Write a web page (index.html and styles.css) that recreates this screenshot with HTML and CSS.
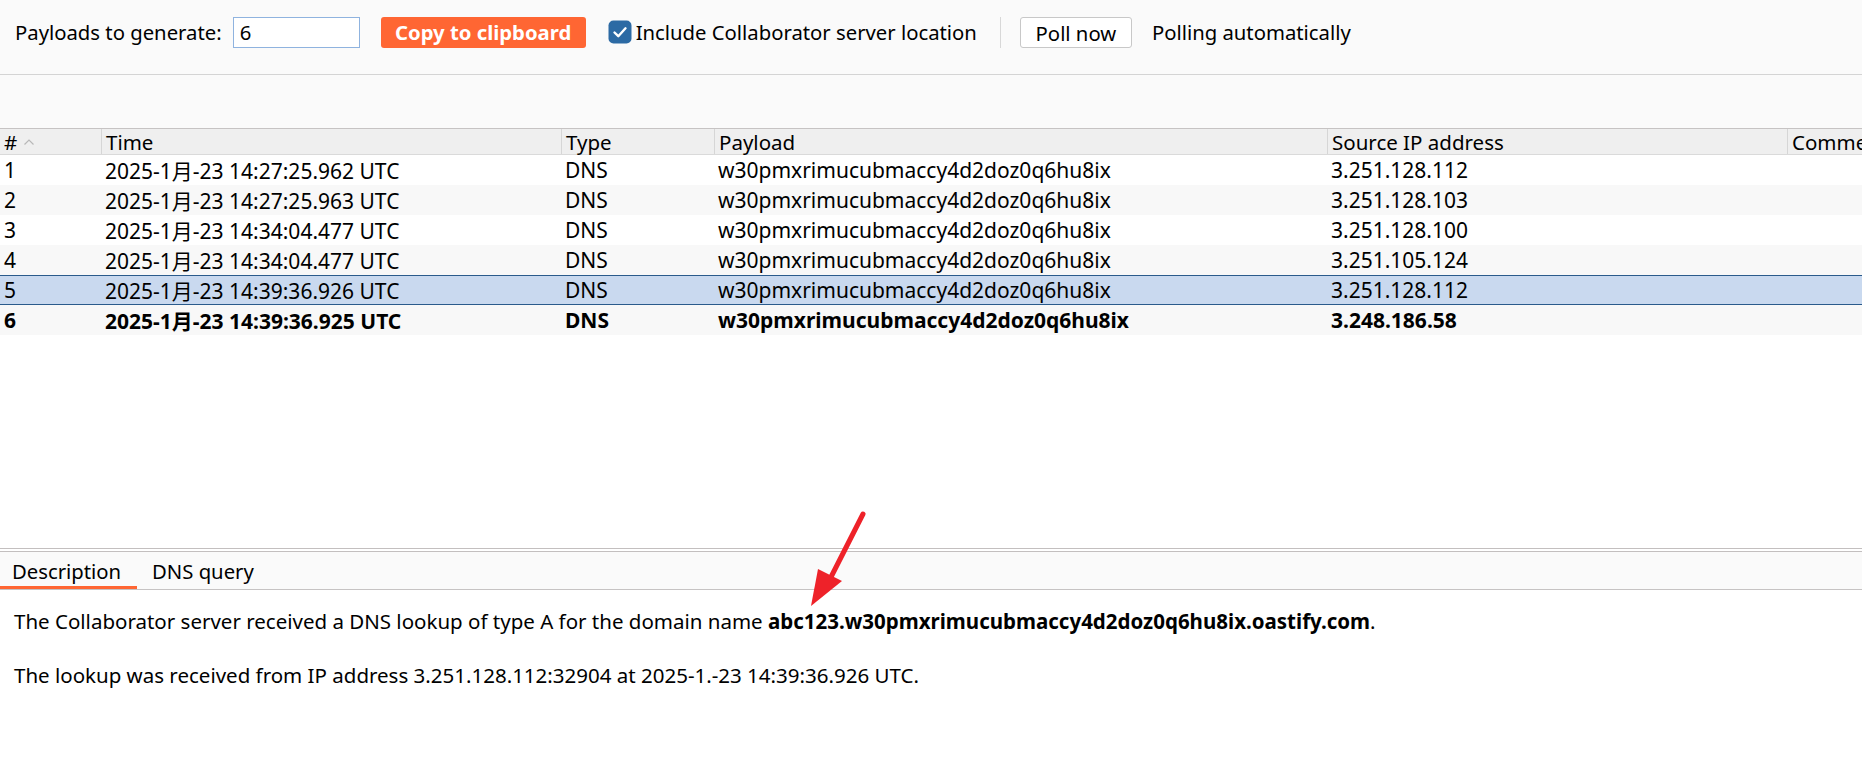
FILE: index.html
```html
<!DOCTYPE html>
<html>
<head>
<meta charset="utf-8">
<link rel="stylesheet" href="styles.css">
</head>
<body>
<div class="app">
  <div class="toolbar">
    <span class="label">Payloads to generate:</span>
    <input class="count" type="text" value="6">
    <button class="copy">Copy to clipboard</button>
    <span class="check">
      <svg viewBox="0 0 24 24" width="24" height="24"><rect x="0.5" y="0.5" width="23" height="23" rx="5" fill="#2c6aa4"/><path d="M6.5 12.5 L10.3 16.2 L17.5 8.3" fill="none" stroke="#fff" stroke-width="2.4" stroke-linecap="round" stroke-linejoin="round"/></svg>
    </span>
    <span class="check-label">Include Collaborator server location</span>
    <span class="sep"></span>
    <button class="poll">Poll now</button>
    <span class="status">Polling automatically</span>
  </div>
  <div class="gap"></div>
  <div class="table">
    <div class="row head">
      <div class="cell c-num">#<svg class="sort" width="12" height="8" viewBox="0 0 12 8"><path d="M1.5 6.5 L6 2 L10.5 6.5" fill="none" stroke="#b8b8b8" stroke-width="1.2"/></svg></div>
      <div class="cell">Time</div>
      <div class="cell">Type</div>
      <div class="cell">Payload</div>
      <div class="cell">Source IP address</div>
      <div class="cell last">Comme</div>
    </div>
    <div class="row">
      <div class="cell">1</div><div class="cell">2025-1月-23 14:27:25.962 UTC</div><div class="cell">DNS</div><div class="cell">w30pmxrimucubmaccy4d2doz0q6hu8ix</div><div class="cell">3.251.128.112</div><div class="cell"></div>
    </div>
    <div class="row alt">
      <div class="cell">2</div><div class="cell">2025-1月-23 14:27:25.963 UTC</div><div class="cell">DNS</div><div class="cell">w30pmxrimucubmaccy4d2doz0q6hu8ix</div><div class="cell">3.251.128.103</div><div class="cell"></div>
    </div>
    <div class="row">
      <div class="cell">3</div><div class="cell">2025-1月-23 14:34:04.477 UTC</div><div class="cell">DNS</div><div class="cell">w30pmxrimucubmaccy4d2doz0q6hu8ix</div><div class="cell">3.251.128.100</div><div class="cell"></div>
    </div>
    <div class="row alt">
      <div class="cell">4</div><div class="cell">2025-1月-23 14:34:04.477 UTC</div><div class="cell">DNS</div><div class="cell">w30pmxrimucubmaccy4d2doz0q6hu8ix</div><div class="cell">3.251.105.124</div><div class="cell"></div>
    </div>
    <div class="row selected">
      <div class="cell">5</div><div class="cell">2025-1月-23 14:39:36.926 UTC</div><div class="cell">DNS</div><div class="cell">w30pmxrimucubmaccy4d2doz0q6hu8ix</div><div class="cell">3.251.128.112</div><div class="cell"></div>
    </div>
    <div class="row alt bold">
      <div class="cell">6</div><div class="cell">2025-1月-23 14:39:36.925 UTC</div><div class="cell">DNS</div><div class="cell">w30pmxrimucubmaccy4d2doz0q6hu8ix</div><div class="cell">3.248.186.58</div><div class="cell"></div>
    </div>
  </div>
  <div class="divider"></div>
  <div class="tabs">
    <span class="tab active">Description</span>
    <span class="tab">DNS query</span>
  </div>
  <div class="desc">
    <p>The Collaborator server received a DNS lookup of type A for the domain name <b>abc123.w30pmxrimucubmaccy4d2doz0q6hu8ix.oastify.com</b>.</p>
    <p>The lookup was received from IP address 3.251.128.112:32904 at 2025-1.-23 14:39:36.926 UTC.</p>
  </div>
  <svg class="arrow" width="80" height="110" viewBox="0 0 80 110">
    <path d="M58 6 L25 71" stroke="#ee2229" stroke-width="5" stroke-linecap="round" fill="none"/>
    <path d="M6 98 L13 61 L37 73 Z" fill="#ee2229"/>
  </svg>
</div>
</body>
</html>
```
FILE: styles.css
```css
html, body {
  margin: 0;
  padding: 0;
  background: #ffffff;
}
.app {
  position: relative;
  width: 1862px;
  height: 760px;
  overflow: hidden;
  font-family: "Noto Sans", "Noto Sans CJK SC", sans-serif;
  font-size: 20px;
  color: #000;
}
.toolbar {
  height: 57px;
  display: flex;
  align-items: flex-start;
  padding: 17px 0 0 15px;
  background: #fafafa;
  border-bottom: 1px solid #d4d4d4;
  font-size: 20.3px;
  line-height: 31px;
}
.toolbar > * {
  flex: none;
}
.count {
  margin-left: 11px;
  width: 127px;
  height: 31px;
  box-sizing: border-box;
  border: 1px solid #8fb3df;
  padding: 0 0 0 6px;
  font: inherit;
  background: #fff;
  outline: none;
}
.copy {
  margin-left: 21px;
  width: 205px;
  height: 31px;
  border: none;
  border-radius: 3px;
  background: #ff6633;
  color: #fff;
  font: inherit;
  font-weight: bold;
  padding: 0;
}
.check {
  margin-left: 22px;
  margin-top: 3px;
  display: flex;
  width: 24px;
  height: 24px;
}
.check-label {
  margin-left: 4px;
}
.sep {
  width: 1px;
  height: 31px;
  background: #d8d8d8;
  margin-left: 23px;
}
.poll {
  margin-left: 19px;
  width: 112px;
  height: 31px;
  border: 1px solid #c8c8c8;
  border-radius: 3px;
  background: #fff;
  font: inherit;
  padding: 0;
  color: #000;
}
.status {
  margin-left: 20px;
}
.gap {
  height: 53px;
  background: #fafafa;
}
.table {
  height: 419px;
  background: #fff;
  border-top: 1px solid #c6c3c3;
  font-size: 21px;
}
.row {
  display: grid;
  grid-template-columns: 101px 460px 153px 613px 460px 1fr;
  height: 30px;
  align-items: center;
}
.row.head {
  height: 25px;
  background: #efefef;
  border-bottom: 1px solid #dadada;
  font-size: 20.5px;
}
.head .cell {
  height: 25px;
  line-height: 26px;
  border-left: 1px solid #d6d6d6;
  overflow: visible;
}
.head .cell:first-child {
  border-left: none;
}
.head .cell.last {
  overflow: hidden;
}
.cell {
  padding-left: 4px;
  white-space: nowrap;
  overflow: hidden;
}
.sort {
  margin-left: 6px;
  vertical-align: 4px;
}
.row.alt {
  background: #f8f8f8;
}
.row.selected {
  background: #c9d9ef;
  border-top: 1px solid #2a5b8c;
  border-bottom: 1px solid #2a5b8c;
  height: 28px;
}
.row.bold {
  font-weight: bold;
}
.divider {
  height: 2px;
  border-top: 1px solid #c3bfbf;
  border-bottom: 1px solid #c3bfbf;
  background: #fff;
}
.tabs {
  height: 37px;
  background: #fafafa;
  border-bottom: 1px solid #c6c3c3;
  display: flex;
  align-items: stretch;
  font-size: 20.3px;
}
.tab {
  display: flex;
  align-items: center;
  padding: 1px 16px 0 12px;
}
.tab.active {
  box-shadow: inset 0 -3px 0 #ff6633;
  width: 137px;
  box-sizing: border-box;
  padding-right: 0;
}
.tab.active + .tab {
  padding-left: 15px;
}
.desc {
  padding-left: 14px;
  font-size: 20.5px;
}
.desc p {
  margin: 0;
  height: 54px;
  line-height: 63px;
}
.arrow {
  position: absolute;
  left: 805px;
  top: 508px;
}
```
